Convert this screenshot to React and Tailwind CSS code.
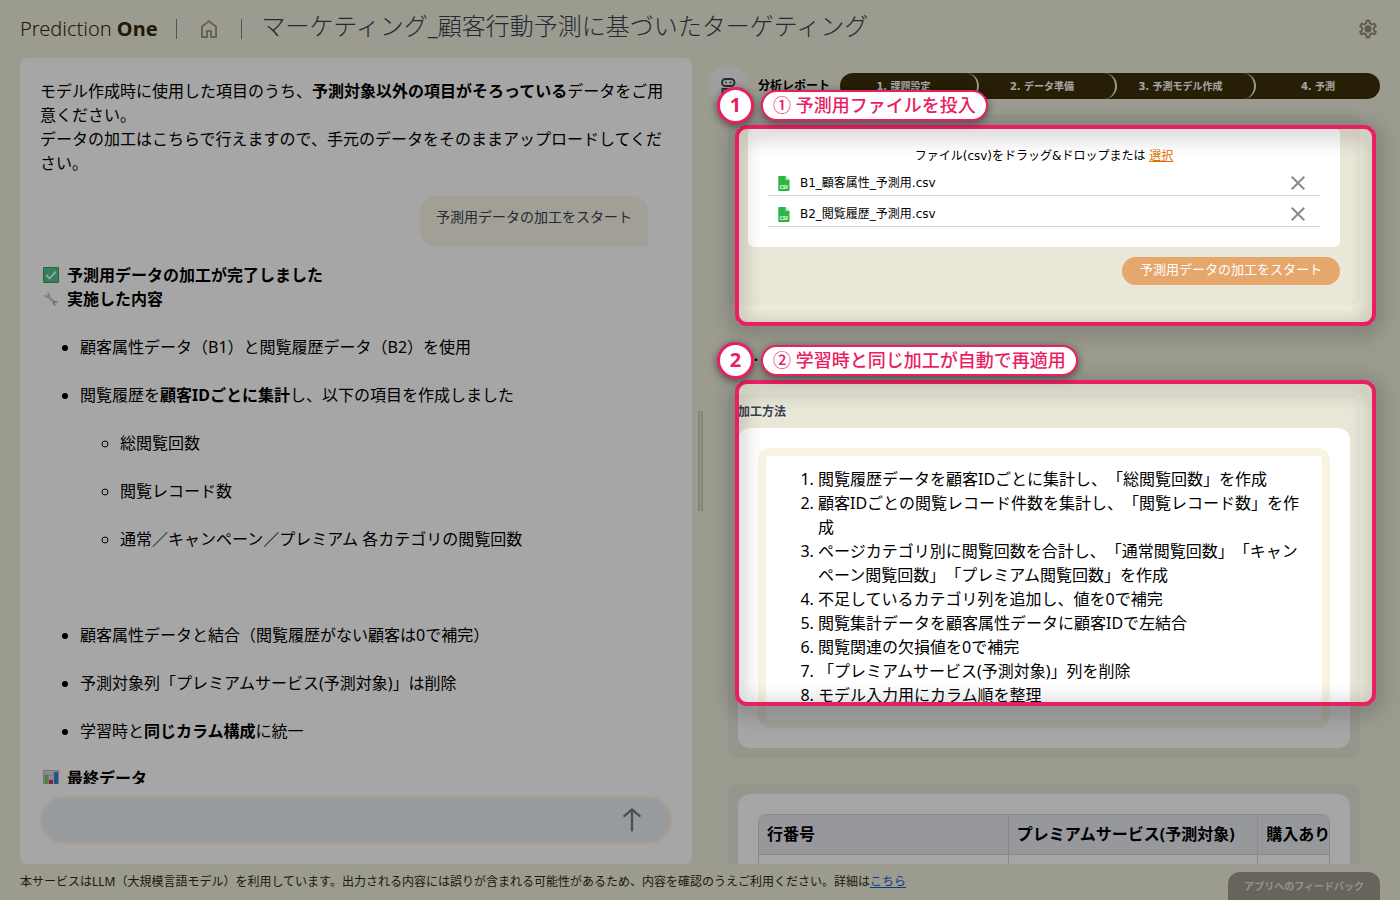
import { MdOutlineSettings, MdClose } from "react-icons/md";

const steps = ["1. 課題設定", "2. データ準備", "3. 予測モデル作成", "4. 予測"];
const files = ["B1_顧客属性_予測用.csv", "B2_閲覧履歴_予測用.csv"];
const methods = [
  "閲覧履歴データを顧客IDごとに集計し、「総閲覧回数」を作成",
  "顧客IDごとの閲覧レコード件数を集計し、「閲覧レコード数」を作成",
  "ページカテゴリ別に閲覧回数を合計し、「通常閲覧回数」「キャンペーン閲覧回数」「プレミアム閲覧回数」を作成",
  "不足しているカテゴリ列を追加し、値を0で補完",
  "閲覧集計データを顧客属性データに顧客IDで左結合",
  "閲覧関連の欠損値を0で補完",
  "「プレミアムサービス(予測対象)」列を削除",
  "モデル入力用にカラム順を整理",
];

function HomeIcon() {
  return (
    <svg viewBox="0 -960 960 960" className="size-6" fill="currentColor" aria-hidden="true">
      <path d="M240-200h120v-240h240v240h120v-360L480-740 240-560v360Zm-80 80v-480l320-240 320 240v480H520v-240h-80v240H160Z" />
    </svg>
  );
}

function SettingsIcon() {
  return (
    <svg viewBox="0 0 24 24" className="size-[22px]" fill="currentColor" aria-hidden="true">
      <MdOutlineSettings size={24} />
      <circle cx="12" cy="12" r="3" />
    </svg>
  );
}

function RobotIcon() {
  return (
    <svg viewBox="0 0 24 24" className="size-6" fill="none" stroke="#3f454d" strokeWidth="1.9" aria-hidden="true">
      <rect x="6" y="5" width="12.5" height="7" rx="3.5" />
      <path d="M6.5 20v-5h11.5V20" />
      <circle cx="10" cy="8.5" r="0.9" fill="#3f454d" stroke="none" />
      <circle cx="14.5" cy="8.5" r="0.9" fill="#3f454d" stroke="none" />
    </svg>
  );
}

function CheckEmoji() {
  return (
    <svg viewBox="0 0 16 16" className="size-4" aria-hidden="true">
      <rect width="16" height="16" rx="1" fill="#55c48b" />
      <rect x="0.5" y="0.5" width="15" height="15" rx="1" fill="none" stroke="#379a68" />
      <path d="M3.2 8.2l3.3 3.4 6.4-7" fill="none" stroke="#fff" strokeWidth="1.7" />
    </svg>
  );
}

function WrenchEmoji() {
  return (
    <svg viewBox="0 0 16 16" className="size-4" aria-hidden="true">
      <path d="M5 5.5l6.5 6" stroke="#cfc3d8" strokeWidth="2.6" />
      <path d="M1.3 3.2l2.4 1.5 1.2-1.3L3.6 1.2C5.8 0.8 7.6 2.4 7.2 4.8 6.2 7 3.8 7.4 2.2 6.2 1.3 5.4 1 4.3 1.3 3.2z" fill="#cfc3d8" />
      <path d="M14.8 12.6l-1.9-1.1-1.1 1.1 1.1 2c-2 .4-3.4-.8-3.2-2.8.6-1.9 2.7-2.5 4.2-1.4.8.6 1.1 1.3.9 2.2z" fill="#b7a9c4" />
    </svg>
  );
}

function ChartEmoji() {
  return (
    <svg viewBox="0 0 16 16" className="size-4" aria-hidden="true">
      <rect x="0.5" y="0.5" width="15" height="15" fill="#d9d3e0" stroke="#b9b2c4" />
      <path d="M0 5h16M0 10h16" stroke="#b9b2c4" strokeWidth="0.7" />
      <rect x="1.5" y="5" width="4" height="11" fill="#82c45c" />
      <rect x="6" y="10" width="4" height="6" fill="#d6336c" />
      <rect x="11" y="2" width="4" height="14" fill="#2f86d1" />
    </svg>
  );
}

function CsvIcon() {
  return (
    <svg viewBox="0 0 12 15" className="h-[15px] w-3" aria-hidden="true">
      <path d="M1 0h6.5L11.5 4v10a1 1 0 0 1-1 1H1a.7.7 0 0 1-.7-.7V.7A.7.7 0 0 1 1 0z" fill="#2db742" />
      <path d="M7.5 0v4h4z" fill="#b5e6bd" />
      <text x="5.9" y="12.5" textAnchor="middle" fontSize="4.5" fontWeight="700" fill="#fff" fontFamily="Noto Sans, sans-serif">CSV</text>
    </svg>
  );
}

function Callout({ number, children }) {
  return (
    <div className="absolute -top-[41px] -left-[21px] flex items-center gap-[7px] font-bold whitespace-nowrap text-[#e91e63]">
      <span className="flex size-[37px] items-center justify-center rounded-full border-3 border-[#e91e63] bg-white pb-px text-xl shadow-[0_2px_8px_rgba(0,0,0,0.5)]">
        {number}
      </span>
      <span className="flex h-[31px] items-center rounded-full border-2 border-[#e91e63] bg-white px-[10px] pb-px text-lg font-medium shadow-[0_2px_8px_rgba(0,0,0,0.5)]">
        {children}
      </span>
    </div>
  );
}

function Frame({ number, label }) {
  return (
    <div className="relative">
      <div className="absolute -inset-[3px] rounded-xl border-4 border-[#e91e63] drop-shadow-[0_4px_10px_rgba(0,0,0,0.7)]" />
      <Callout number={number}>{label}</Callout>
    </div>
  );
}

function Tour() {
  return (
    <div className="pointer-events-none absolute inset-0 grid grid-cols-[738px_1fr_27px] grid-rows-[128px_195px_60px_320px_1fr]">
      <div className="col-span-3 bg-black/35" />
      <div className="bg-black/35" />
      <div />
      <div className="bg-black/35" />
      <div className="col-span-3 bg-black/35" />
      <div className="bg-black/35" />
      <div />
      <div className="bg-black/35" />
      <div className="col-span-3 bg-black/35" />
      <div className="absolute inset-0 grid grid-cols-[738px_1fr_27px] grid-rows-[128px_195px_60px_320px_1fr]">
        <div className="col-start-2 row-start-2 grid">
          <Frame number="1" label="① 予測用ファイルを投入" />
        </div>
        <div className="col-start-2 row-start-4 grid">
          <Frame number="2" label="② 学習時と同じ加工が自動で再適用" />
        </div>
      </div>
    </div>
  );
}

function Header() {
  return (
    <header className="flex h-[58px] shrink-0 items-center px-5 text-[#33290a]">
      <span className="text-xl">
        <span className="font-light">Prediction</span> <b>One</b>
      </span>
      <span className="ml-[18px] h-5 w-px bg-[#7b7f8c]" />
      <a href="#home" aria-label="ホーム" className="mx-5 text-[#9f9b88]">
        <HomeIcon />
      </a>
      <span className="h-5 w-px bg-[#7b7f8c]" />
      <h1 className="ml-5 pb-[6px] text-2xl font-light text-[#374151]">マーケティング_顧客行動予測に基づいたターゲティング</h1>
      <button aria-label="設定" className="mr-px ml-auto text-[#8f8b74]">
        <SettingsIcon />
      </button>
    </header>
  );
}

function Chat() {
  return (
    <section className="flex w-[48%] shrink-0 flex-col rounded-lg bg-white px-5 pt-[21px] pb-5">
      <div className="min-h-0 flex-1 overflow-hidden text-base">
        <p>
          モデル作成時に使用した項目のうち、<b>予測対象以外の項目がそろっている</b>データをご用意ください。
          <br />
          データの加工はこちらで行えますので、手元のデータをそのままアップロードしてください。
        </p>
        <div className="mt-[21px] mr-6 ml-auto w-fit rounded-2xl rounded-br-xs bg-[#f9f4e6] px-4 pt-[9px] pb-4 text-sm leading-6 text-[#374151] shadow-xs">
          予測用データの加工をスタート
        </div>
        <h2 className="mt-[18px] flex items-center gap-2 pl-[3px] font-bold">
          <CheckEmoji />
          予測用データの加工が完了しました
        </h2>
        <h2 className="flex items-center gap-2 pl-[3px] font-bold">
          <WrenchEmoji />
          実施した内容
        </h2>
        <ul className="mt-6 list-disc space-y-6 pl-10">
          <li>顧客属性データ（B1）と閲覧履歴データ（B2）を使用</li>
          <li>
            閲覧履歴を<b>顧客IDごとに集計</b>し、以下の項目を作成しました
            <ul className="mt-6 mb-[72px] list-[circle] space-y-6 pl-10">
              <li>総閲覧回数</li>
              <li>閲覧レコード数</li>
              <li>通常／キャンペーン／プレミアム 各カテゴリの閲覧回数</li>
            </ul>
          </li>
          <li>顧客属性データと結合（閲覧履歴がない顧客は0で補完）</li>
          <li>予測対象列「プレミアムサービス(予測対象)」は削除</li>
          <li>
            学習時と<b>同じカラム構成</b>に統一
          </li>
        </ul>
        <h2 className="mt-[23px] flex items-center gap-2 pl-[3px] font-bold">
          <ChartEmoji />
          最終データ
        </h2>
      </div>
      <form className="mt-3 flex h-12 shrink-0 items-center rounded-3xl border-3 border-[#f9f3e4] bg-[#e9eef3] pr-[23px] pl-5">
        <input aria-label="メッセージ" className="min-w-0 flex-1 bg-transparent outline-none" />
        <button type="button" aria-label="送信" className="text-[#777a7e]">
          <svg viewBox="0 0 24 24" className="size-7" fill="none" stroke="currentColor" strokeWidth="2" strokeLinecap="round" strokeLinejoin="round" aria-hidden="true">
            <path d="M12 21V3M5.5 8.5L12 3l6.5 5.5" />
          </svg>
        </button>
      </form>
    </section>
  );
}

function StepBar() {
  return (
    <ol className="grid h-[26px] flex-1 grid-cols-[139fr_138fr_139fr_124fr] rounded-full bg-[#3d3009] font-['DejaVu_Sans','Noto_Sans_CJK_JP',sans-serif] text-[10px] font-bold text-white">
      {steps.map((step, i) => (
        <li
          key={step}
          className={
            i < 3
              ? "flex items-center justify-center rounded-r-full border-r-2 border-[#f0eedc] pr-[10px]"
              : "flex items-center justify-center"
          }
        >
          {step}
        </li>
      ))}
    </ol>
  );
}

function Upload() {
  return (
    <section className="rounded-b-lg bg-[#e9e7d8] px-5 pt-[14px] pb-5">
      <div className="rounded-md bg-white px-5 pt-[19px] pb-5 font-['DejaVu_Sans','Noto_Sans_CJK_JP',sans-serif] text-xs">
        <p className="text-center leading-[18px]">
          ファイル(csv)をドラッグ&amp;ドロップまたは{" "}
          <a href="#select" className="text-[#e07000] underline">選択</a>
        </p>
        <ul>
          {files.map((file) => (
            <li key={file} className="flex h-[31px] items-center border-b border-[#d6d4cc] px-[10px] pt-[6px]">
              <CsvIcon />
              <span className="ml-[10px] flex-1">{file}</span>
              <button aria-label={`${file}を削除`} className="text-[#8b8b8b]">
                <MdClose className="size-6" />
              </button>
            </li>
          ))}
        </ul>
      </div>
      <button className="mt-[10px] ml-auto block h-7 rounded-full bg-[#e5a76b] px-[18px] pb-[2px] text-[13px] text-white">
        予測用データの加工をスタート
      </button>
    </section>
  );
}

function Report() {
  return (
    <section className="flex min-w-0 flex-1 flex-col">
      <div className="flex h-14 shrink-0 items-center pl-[5px]">
        <span className="flex size-10 shrink-0 items-center justify-center rounded-full bg-[#f4f4f4]">
          <RobotIcon />
        </span>
        <h2 className="mr-[10px] ml-[10px] text-xs font-bold">分析レポート</h2>
        <StepBar />
      </div>
      <div className="min-h-0 flex-1 overflow-hidden pr-5 pl-[25px]">
        <Upload />
        <p className="h-[89px] pt-[47px] pl-[22px] text-xs leading-[18px]">・・・</p>
        <section className="rounded-lg bg-[#e9e7d8] p-[10px]">
          <h3 className="pb-2 text-xs font-bold text-[#374151]">加工方法</h3>
          <div className="rounded-xl bg-white p-5">
            <ol className="list-decimal rounded-xl border-8 border-[#f7f4e4] pt-[11px] pr-3 pb-[13px] pl-[52px]">
              {methods.map((m) => (
                <li key={m}>{m}</li>
              ))}
            </ol>
          </div>
        </section>
        <section className="mt-[26px] rounded-lg bg-[#e9e7d8] p-[10px]">
          <div className="rounded-xl bg-white p-5">
            <div className="overflow-hidden rounded-lg border border-[#d1d3d8]">
              <table className="w-[748px] table-fixed border-collapse text-left">
                <thead className="bg-[#e7eaee]">
                  <tr className="h-[39px]">
                    <th className="border-r border-b border-[#d1d3d8] px-2">行番号</th>
                    <th className="border-r border-b border-[#d1d3d8] px-2">プレミアムサービス(予測対象)</th>
                    <th className="border-b border-[#d1d3d8] px-2">購入あり</th>
                  </tr>
                </thead>
                <tbody>
                  <tr className="h-10">
                    <td className="border-r border-[#d1d3d8]" />
                    <td className="border-r border-[#d1d3d8]" />
                    <td />
                  </tr>
                </tbody>
              </table>
            </div>
          </div>
        </section>
      </div>
    </section>
  );
}

export default function App() {
  return (
    <div className="relative flex h-screen flex-col overflow-hidden bg-[#f0eedc] font-['Noto_Sans','Noto_Sans_CJK_JP',sans-serif] text-black [text-spacing-trim:space-all]">
      <Header />
      <main className="flex min-h-0 flex-1">
        <div className="w-5 shrink-0" />
        <Chat />
        <div className="flex w-[11px] shrink-0 items-center justify-end">
          <div className="h-[100px] w-[5px] border-x-2 border-[#cdcabb]" />
        </div>
        <Report />
        <div className="w-5 shrink-0" />
      </main>
      <footer className="flex h-9 shrink-0 items-end justify-between px-5">
        <p className="self-center text-xs text-[#33290a]">
          本サービスはLLM（大規模言語モデル）を利用しています。出力される内容には誤りが含まれる可能性があるため、内容を確認のうえご利用ください。詳細は
          <a href="#details" className="text-[#0b5fc0] underline">こちら</a>
        </p>
        <button className="h-7 rounded-t-xl bg-[#9e9a8e] px-4 text-[10px] font-bold text-white/70">
          アプリへのフィードバック
        </button>
      </footer>
      <Tour />
    </div>
  );
}
